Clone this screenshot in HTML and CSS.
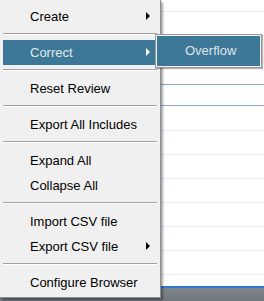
FILE: index.html
```html
<!DOCTYPE html>
<html lang="en">
<head>
    <meta charset="UTF-8">
    <title>Review Menu</title>
    <link rel="stylesheet" href="styles.css">
</head>
<body>
    <div class="page">
        <div class="grid">
            <div class="row first"></div>
            <div class="row"></div>
            <div class="row"></div>
            <div class="row tall dark"></div>
            <div class="row selected"></div>
            <div class="row tall"></div>
            <div class="row"></div>
            <div class="row"></div>
            <div class="row"></div>
            <div class="row"></div>
            <div class="row"></div>
            <div class="row"></div>
            <div class="row last"></div>
        </div>
        <div class="statusbar"></div>

        <div class="menu">
            <div class="item">Create<span class="arrow"></span></div>
            <div class="sep"></div>
            <div class="item active">Correct<span class="arrow"></span></div>
            <div class="sep"></div>
            <div class="item">Reset Review</div>
            <div class="sep"></div>
            <div class="item">Export All Includes</div>
            <div class="sep"></div>
            <div class="item">Expand All</div>
            <div class="item">Collapse All</div>
            <div class="sep"></div>
            <div class="item">Import CSV file</div>
            <div class="item">Export CSV file<span class="arrow"></span></div>
            <div class="sep"></div>
            <div class="item">Configure Browser</div>
        </div>

        <div class="submenu">
            <div class="sub-item">Overflow</div>
        </div>
    </div>
</body>
</html>
```

FILE: styles.css
```css
html, body {
    margin: 0;
    padding: 0;
}

body {
    font-family: 'Liberation Sans', Arial, sans-serif;
    font-size: 13px;
    background-color: #ffffff;
}

.page {
    position: relative;
    width: 264px;
    height: 301px;
    overflow: hidden;
}

/* rows of the list behind the menu */
.grid {
    display: flex;
    flex-direction: column;
}

.row {
    height: 23px;
    border-bottom: 1px solid #e3eef8;
}

.row.first {
    height: 11px;
}

.row.tall {
    height: 24px;
}

.row.dark {
    border-bottom-color: #86a9d8;
}

.row.selected {
    height: 20px;
    border-bottom-color: #86a9d8;
}

.row.last {
    height: 11px;
    border-bottom: none;
}

.statusbar {
    height: 14px;
    border-top: 2px solid #2b7bd2;
    background: linear-gradient(#7d848b, #6f767e);
}

/* context menu */
.menu {
    position: absolute;
    top: 0;
    left: 0;
    width: 160px;
    padding: 4px 0 2px;
    background-color: #f0f0f0;
    border-right: 1px solid #8e8e8e;
    border-bottom: 1px solid #8e8e8e;
    box-shadow: 2px 2px 2px rgba(0,0,0,0.35);
}

.item {
    position: relative;
    height: 25px;
    line-height: 25px;
    padding-left: 27px;
    margin: 0 2px 0 3px;
    color: #000000;
    white-space: nowrap;
}

.item.active {
    background-color: #3e7898;
    color: #e2e8ec;
}

.arrow {
    position: absolute;
    left: 143px;
    top: 8px;
    width: 0;
    height: 0;
    border-left: 4px solid #000000;
    border-top: 4px solid transparent;
    border-bottom: 4px solid transparent;
}

.item.active .arrow {
    border-left-color: #ffffff;
}

.sep {
    height: 0;
    margin: 4px 3px 5px;
    border-top: 1px solid #a0a0a0;
    border-bottom: 1px solid #ffffff;
}

/* sub menu */
.submenu {
    position: absolute;
    top: 34px;
    left: 155px;
    padding: 1px;
    background-color: #f0f0f0;
    border: 1px solid #9a9a9a;
    box-shadow: 1px 1px 1px rgba(0,0,0,0.3);
}

.sub-item {
    width: 75px;
    height: 30px;
    line-height: 30px;
    padding-left: 28px;
    background-color: #3e7898;
    color: #dde4e8;
}
```
